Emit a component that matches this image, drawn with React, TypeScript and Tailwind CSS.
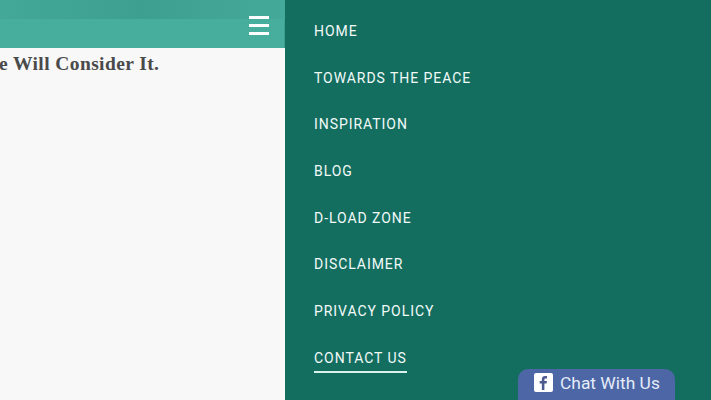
const items = ["HOME", "TOWARDS THE PEACE", "INSPIRATION", "BLOG", "D-LOAD ZONE", "DISCLAIMER", "PRIVACY POLICY", "CONTACT US"];

export default function App() {
  return (
    <div className="relative flex h-[400px] w-[711px] overflow-hidden bg-[#146e60] font-['Roboto',sans-serif]">
      <div className="flex h-full w-[285px] shrink-0 flex-col overflow-hidden bg-[#f8f8f8]">
        <div className="h-[19px] shrink-0 bg-gradient-to-r from-[#43a898] via-[#3d9f90] to-[#45a999]" />
        <div className="flex h-[29px] shrink-0 items-start justify-end border-r border-[#3d9f90] bg-[#47ad9d] pr-[15px]">
          <div className="-mt-[3px] flex w-[20px] flex-col gap-[5px]">
            <div className="h-[3px] bg-white" />
            <div className="h-[3px] bg-white" />
            <div className="h-[3px] bg-white" />
          </div>
        </div>
        <div className="mt-[5px] whitespace-nowrap font-['Liberation_Serif',serif] text-[19.5px] leading-[22px] font-bold tracking-[0.4px] text-[#4a4a4a]">
          <span className="-ml-[1px] inline-block">e Will Consider It.</span>
        </div>
      </div>
      <nav className="flex flex-1 flex-col gap-[24px] pt-[21px] pl-[29px]">
        {items.map((t, i) => (
          <div key={t} className="flex h-[22.7px] items-start">
            <a className={`pb-[3px] text-[14px] leading-[20px] tracking-[0.95px] text-[#f2faf8] ${i === 7 ? "border-b-2 border-[#d8f3ec]" : ""}`}>{t}</a>
          </div>
        ))}
      </nav>
      <div className="absolute top-[369px] left-[518px] flex h-[40px] w-[157px] items-start gap-[7px] rounded-t-[10px] bg-[#4c66a6] pt-[4px] pl-[16px]">
        <div className="flex h-[19px] w-[19px] items-end justify-center overflow-hidden rounded-[2px] bg-white">
          <svg viewBox="0 0 19 19" className="h-[19px] w-[19px]">
            <path d="M10.4 17V10.6h2.2l.35-2.5H10.4V6.6c0-.75.25-1.2 1.25-1.2H13V3.1c-.3 0-1-.1-1.95-.1-1.95 0-3.2 1.15-3.2 3.3v1.8H5.7v2.5h2.15V17z" fill="#4c5a8f" />
          </svg>
        </div>
        <span className="text-[17.4px] leading-[20px] text-[#e4ecf8]">Chat With Us</span>
      </div>
    </div>
  );
}
